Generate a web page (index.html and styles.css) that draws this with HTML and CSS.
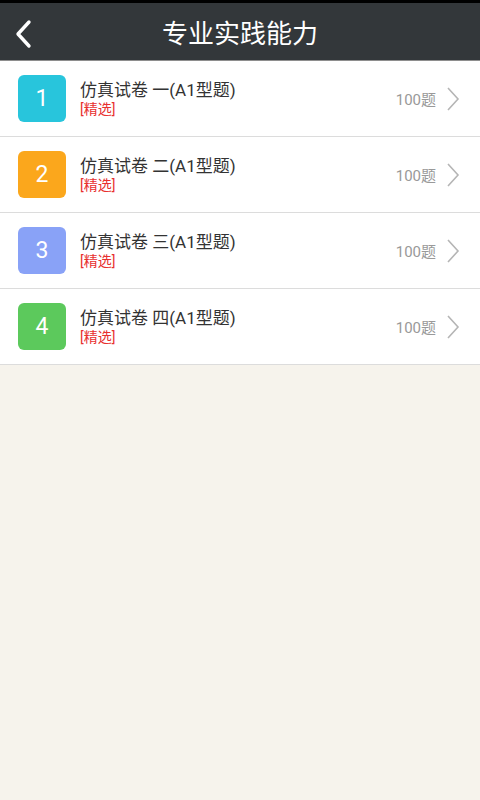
FILE: index.html
```html
<!DOCTYPE html>
<html lang="zh">
<head>
<meta charset="utf-8">
<link rel="stylesheet" href="styles.css">
</head>
<body>
<div class="status"></div>
<header class="bar">
  <svg class="back" width="20" height="30" viewBox="0 0 20 30"><path d="M15 3 L4 15 L15 27" fill="none" stroke="#fff" stroke-width="3.4" stroke-linecap="round" stroke-linejoin="round"/></svg>
  <h1 class="title">专业实践能力</h1>
</header>
<ul class="list">
  <li class="row">
    <div class="num c1">1</div>
    <div class="text"><div class="name">仿真试卷 一(A1型题)</div><div class="tag">[精选]</div></div>
    <div class="count">100题</div>
    <svg class="chev" width="14" height="24" viewBox="0 0 14 24"><path d="M2 1 L12 12 L2 23" fill="none" stroke="#b5b5b5" stroke-width="1.6"/></svg>
  </li>
  <li class="row">
    <div class="num c2">2</div>
    <div class="text"><div class="name">仿真试卷 二(A1型题)</div><div class="tag">[精选]</div></div>
    <div class="count">100题</div>
    <svg class="chev" width="14" height="24" viewBox="0 0 14 24"><path d="M2 1 L12 12 L2 23" fill="none" stroke="#b5b5b5" stroke-width="1.6"/></svg>
  </li>
  <li class="row">
    <div class="num c3">3</div>
    <div class="text"><div class="name">仿真试卷 三(A1型题)</div><div class="tag">[精选]</div></div>
    <div class="count">100题</div>
    <svg class="chev" width="14" height="24" viewBox="0 0 14 24"><path d="M2 1 L12 12 L2 23" fill="none" stroke="#b5b5b5" stroke-width="1.6"/></svg>
  </li>
  <li class="row">
    <div class="num c4">4</div>
    <div class="text"><div class="name">仿真试卷 四(A1型题)</div><div class="tag">[精选]</div></div>
    <div class="count">100题</div>
    <svg class="chev" width="14" height="24" viewBox="0 0 14 24"><path d="M2 1 L12 12 L2 23" fill="none" stroke="#b5b5b5" stroke-width="1.6"/></svg>
  </li>
</ul>
</body>
</html>
```
FILE: styles.css
```css
html, body { margin: 0; padding: 0; }
body {
  width: 480px; height: 800px;
  background: #f6f3ec;
  font-family: "Roboto", "Noto Sans CJK SC", sans-serif;
  overflow: hidden;
}
.status { height: 3px; background: #000; }
.bar {
  height: 57px;
  background: #33373a;
  border-bottom: 1px solid #8e8e8e;
  display: flex; align-items: center; justify-content: center;
  position: relative;
}
.back { position: absolute; left: 14px; top: 16px; }
.title {
  margin: 0; color: #fff; font-weight: normal;
  font-size: 26px; letter-spacing: 0;
}
.list { list-style: none; margin: 0; padding: 0; background: #fff; }
.row {
  height: 75px;
  border-bottom: 1px solid #dcdcdc;
  display: flex; align-items: center;
  padding: 0 20px 0 18px;
}
.num {
  width: 48px; height: 47px; border-radius: 6px;
  color: #fff; font-size: 23px;
  display: flex; align-items: center; justify-content: center;
  flex: none;
}
.c1 { background: #28c5dc; }
.c2 { background: #fba71c; }
.c3 { background: #89a2f7; }
.c4 { background: #5cc95c; }
.text { flex: 1; margin-left: 14px; margin-top: 0; }
.name { font-size: 17px; color: #333; line-height: 20px; }
.tag { font-size: 14px; color: #e8302f; line-height: 18px; }
.count { font-size: 15px; color: #999; margin-right: 10px; }
.chev { flex: none; }
```
